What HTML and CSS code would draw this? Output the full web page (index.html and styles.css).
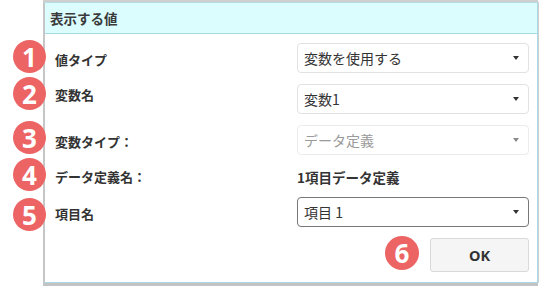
FILE: index.html
```html
<!DOCTYPE html>
<html lang="ja">
<head>
<meta charset="utf-8">
<link rel="stylesheet" href="styles.css">
</head>
<body>
<div class="dialog">
  <div class="header">表示する値</div>
  <div class="body">
    <div class="row">
      <span class="badge b1">1</span>
      <div class="label">値タイプ</div>
      <div class="select"><span>変数を使用する</span><i class="arrow"></i></div>
    </div>
    <div class="row">
      <span class="badge b2">2</span>
      <div class="label label-top">変数名</div>
      <div class="select"><span>変数1</span><i class="arrow"></i></div>
    </div>
    <div class="row">
      <span class="badge b3">3</span>
      <div class="label">変数タイプ：</div>
      <div class="select disabled"><span>データ定義</span><i class="arrow"></i></div>
    </div>
    <div class="row row-text">
      <span class="badge b4">4</span>
      <div class="label">データ定義名：</div>
      <div class="value">1項目データ定義</div>
    </div>
    <div class="row">
      <span class="badge b5">5</span>
      <div class="label label-low">項目名</div>
      <div class="select focused"><span>項目 1</span><i class="arrow"></i></div>
    </div>
    <div class="footer">
      <span class="badge-inline">6</span>
      <button class="ok">OK</button>
    </div>
  </div>
</div>
</body>
</html>
```

FILE: styles.css
```css
html, body {
  margin: 0;
  padding: 0;
  background: #ffffff;
}
body {
  width: 541px;
  height: 306px;
  overflow: hidden;
  padding-top: 2px;
  box-sizing: border-box;
  font-family: "Noto Sans CJK JP", "Noto Sans", sans-serif;
  color: #333;
}
.dialog {
  margin-left: 43px;
  width: 495px;
  box-sizing: border-box;
  border: 1px solid #a9d9e6;
  border-left: 2px solid #c6c6c6;
  border-top: 1px solid #b6dbe6;
  background: #fff;
  box-shadow: 0 3px 0 0 #c3c3c3, 1px 0 0 0 #d0d0d0, 0 -2px 0 0 #cfcfcf;
}
.header {
  height: 30px;
  background: #dcfdfe;
  border-bottom: 1px solid #a6dbe3;
  padding-left: 5px;
  display: flex;
  align-items: center;
  font-size: 13.5px;
  font-weight: 700;
  color: #3a3a3a;
}
.body {
  padding: 9px 8px 10px 10px;
  display: flex;
  flex-direction: column;
  gap: 11px;
}
.row {
  position: relative;
  display: flex;
  align-items: center;
  height: 30px;
}
.label {
  width: 242px;
  font-size: 13px;
  font-weight: 700;
  color: #333;
  line-height: 14px;
  padding-top: 3px;
}
.label-top {
  align-self: flex-start;
  padding-top: 4px;
}
.label-low {
  padding-top: 4px;
}
.row-text {
  align-items: flex-start;
  height: 20px;
}
.row-text .label,
.row-text .value {
  padding-top: 4px;
}
.value {
  font-size: 13.5px;
  font-weight: 700;
  line-height: 14px;
  color: #333;
}
.select {
  width: 232px;
  height: 30px;
  box-sizing: border-box;
  border: 1px solid #e2e2e2;
  border-radius: 4px;
  background: #fff;
  display: flex;
  align-items: center;
  justify-content: space-between;
  padding: 0 9px 0 6px;
  font-size: 14px;
  color: #333;
}
.select.disabled {
  color: #9a9a9a;
  border-color: #ececec;
}
.select.disabled .arrow {
  border-top-color: #8a8a8a;
}
.select.focused {
  border-color: #777;
}
.arrow {
  width: 0;
  height: 0;
  border-left: 3.5px solid transparent;
  border-right: 3.5px solid transparent;
  border-top: 4px solid #333;
}
.badge,
.badge-inline {
  width: 33px;
  height: 33px;
  border-radius: 50%;
  background: #ec6463;
  color: #fff;
  font-family: "Noto Sans", "Liberation Sans", sans-serif;
  font-weight: 700;
  font-size: 26px;
  display: flex;
  align-items: center;
  justify-content: center;
  line-height: 1;
}
.badge {
  position: absolute;
  left: -42px;
}
.b1 { top: -3px; }
.b2 { top: -7px; }
.b3 { top: -4px; }
.b4 { top: -8px; }
.b5 { top: 1px; }
.footer {
  display: flex;
  justify-content: flex-end;
  align-items: center;
  gap: 11px;
  height: 34px;
}
.badge-inline {
  width: 34px;
  height: 34px;
  margin-top: -4px;
}
.ok {
  width: 99px;
  height: 34px;
  box-sizing: border-box;
  border: 1px solid #d9d9d9;
  border-radius: 3px;
  background: #f5f5f5;
  font-family: "Noto Sans", "Liberation Sans", sans-serif;
  font-weight: 700;
  font-size: 14.5px;
  color: #333;
  padding: 0;
}
```
